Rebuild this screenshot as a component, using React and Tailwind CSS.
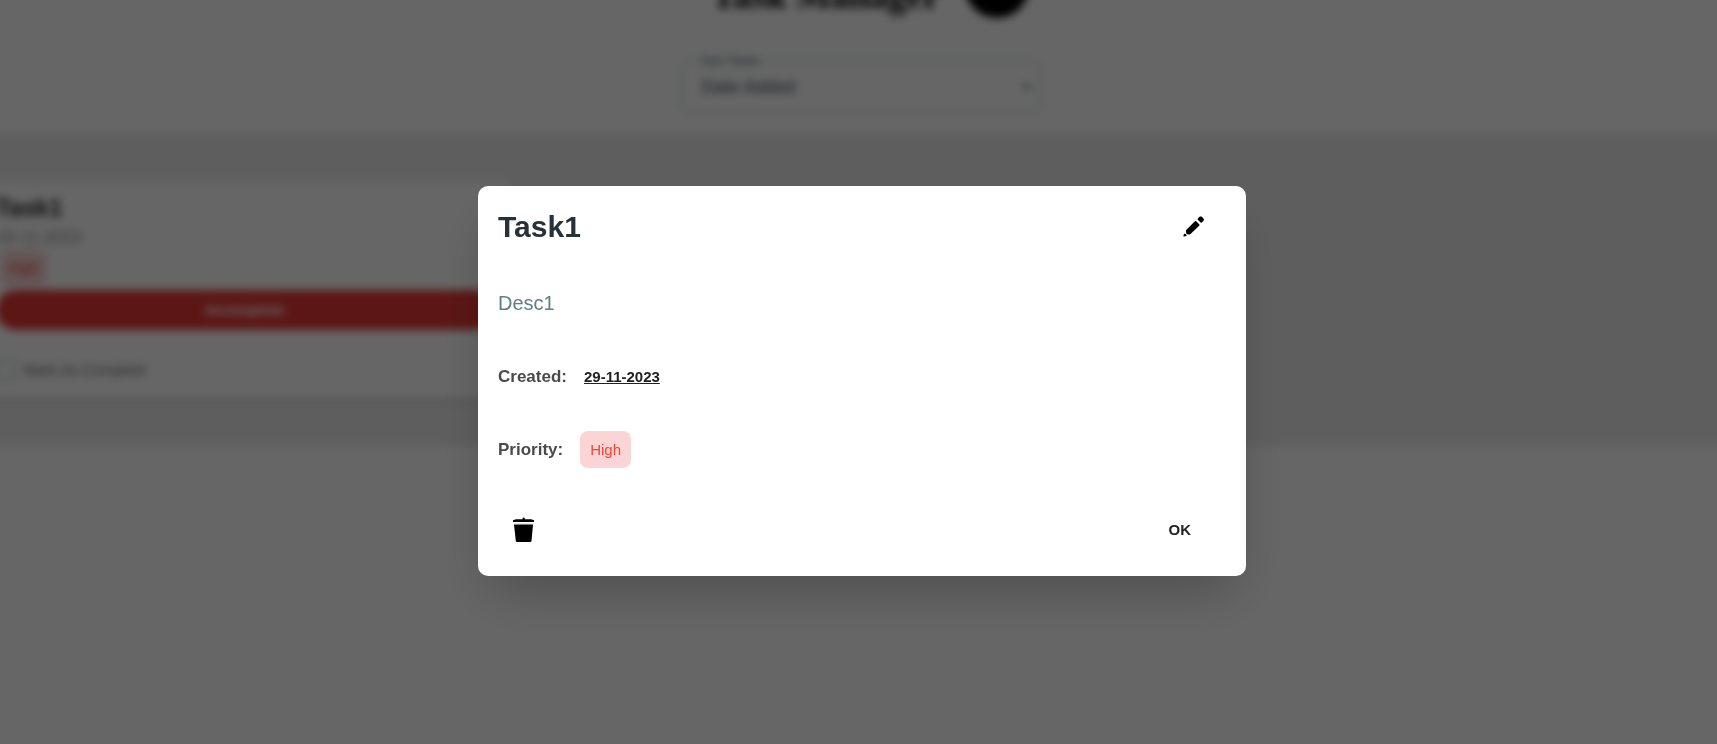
import React from "react";
import { MdArrowDropDown } from "react-icons/md";

function Header() {
  return (
    <header className="flex flex-col items-center bg-white pt-[18px] pb-[21px] pl-1">
      <div className="flex items-center gap-[26px] pl-5">
        <h1 className="pt-5 font-['Liberation_Serif',serif] text-[37px] leading-11 font-bold text-black">Task Manager</h1>
        <button type="button" aria-label="Add task" className="h-16 w-16 rounded-full bg-black text-2xl text-white">+</button>
      </div>
      <div className="relative mt-[43px] w-[360px]">
        <label htmlFor="sort" className="absolute -top-2 left-4 bg-white px-1 text-[13px] leading-4 text-[#455a64]">Sort Tasks</label>
        <select id="sort" defaultValue="added" className="h-13 w-full appearance-none rounded-lg border border-[#b0bec5] bg-transparent px-5 text-lg text-[#37474f]">
          <option value="added">Date Added</option>
        </select>
        <MdArrowDropDown className="absolute top-4 right-1 text-xl text-[#263238]" />
      </div>
    </header>
  );
}

function TaskCard() {
  return (
    <article className="-ml-2 w-[538px] rounded-xl bg-white px-5 pt-3 pb-4 shadow-md">
      <h2 className="text-2xl leading-7 font-bold text-[#212121]">Task1</h2>
      <p className="mt-1 text-[17px] leading-6 text-[#8a8a8a]">29-11-2023</p>
      <span className="ml-1 inline-block rounded-lg bg-[#fbd5d5] px-2 py-2 text-[15px] leading-5 text-[#e53935]">High</span>
      <button type="button" className="mt-1 block h-10 w-full rounded-full bg-[#e53935] text-[15px] font-bold text-white">Incomplete</button>
      <label className="mt-7 flex items-center gap-2 text-[15px] leading-6 text-[#616161]">
        <input type="checkbox" className="h-5 w-5 appearance-none rounded border border-[#90a4ae]" />
        Mark As Complete
      </label>
    </article>
  );
}

function PencilIcon() {
  return (
    <svg viewBox="0 0 24 24" className="h-6 w-6" fill="black" stroke="black" strokeLinejoin="round" strokeWidth="1.8" aria-hidden="true">
      <path d="M13.6 7 16.6 10 7.6 18.6 5.2 18.4 4.8 15.6Z" />
      <path d="M16.5 4.2 18.2 2.3 19.2 2.3 21 4.3 20.9 5.2 19.2 6.8Z" />
      <path d="M1.9 20.9 2.7 19.2 4.1 20.4Z" strokeWidth="1.2" />
    </svg>
  );
}

function TrashIcon() {
  return (
    <svg viewBox="0 0 28 28" className="h-7 w-7" aria-hidden="true">
      <path d="M3 6V4.2L6 3.3H12.6V2Q13.7.8 14.8 2V3.3H21.2L24 4.2V6Z" />
      <path d="M3.6 7.4H23.4" stroke="#dfe4e4" strokeWidth="1" />
      <path d="M4 8.6H23L21.5 25Q21.3 26 20.3 26H7Q6 26 5.8 25Z" />
    </svg>
  );
}

function TaskDialog() {
  return (
    <div className="fixed inset-0 flex items-center justify-center bg-black/60 pt-[18px] pl-[7px]">
      <section role="dialog" aria-modal="true" aria-labelledby="task-title" className="w-3xl max-w-full rounded-[10px] bg-white shadow-2xl">
        <div className="flex items-center justify-between py-5 pr-10 pl-5">
          <h2 id="task-title" className="text-3xl leading-[41px] font-bold text-[#263238]">Task1</h2>
          <button type="button" aria-label="Edit task">
            <PencilIcon />
          </button>
        </div>
        <p className="px-5 py-5 text-xl leading-8 text-[#607d8b]">Desc1</p>
        <div className="flex items-center gap-[17px] px-5 py-6">
          <span className="text-[17px] leading-7 font-bold text-[#4a4a4a]">Created:</span>
          <span className="text-[15px] leading-7 font-bold text-[#212121] underline">29-11-2023</span>
        </div>
        <div className="flex items-center gap-[17px] px-5 py-4">
          <span className="text-[17px] leading-7 font-bold text-[#4a4a4a]">Priority:</span>
          <span className="rounded-lg bg-[#fbd5d5] px-2.5 py-2 text-[15px] leading-[21px] text-[#f44336]">High</span>
        </div>
        <div className="flex items-center justify-between py-[22px] pr-[35px] pl-8">
          <button type="button" aria-label="Delete task">
            <TrashIcon />
          </button>
          <button type="button" className="px-5 py-3 text-[15px] leading-6 font-bold text-[#212121]">OK</button>
        </div>
      </section>
    </div>
  );
}

export default function App() {
  return (
    <div className="min-h-screen overflow-hidden bg-white font-['Liberation_Sans',Arial,sans-serif]">
      <div className="-mx-4 -mt-16 blur-[4px]">
        <Header />
        <main className="bg-[#ececec] py-12">
          <TaskCard />
        </main>
      </div>
      <TaskDialog />
    </div>
  );
}
